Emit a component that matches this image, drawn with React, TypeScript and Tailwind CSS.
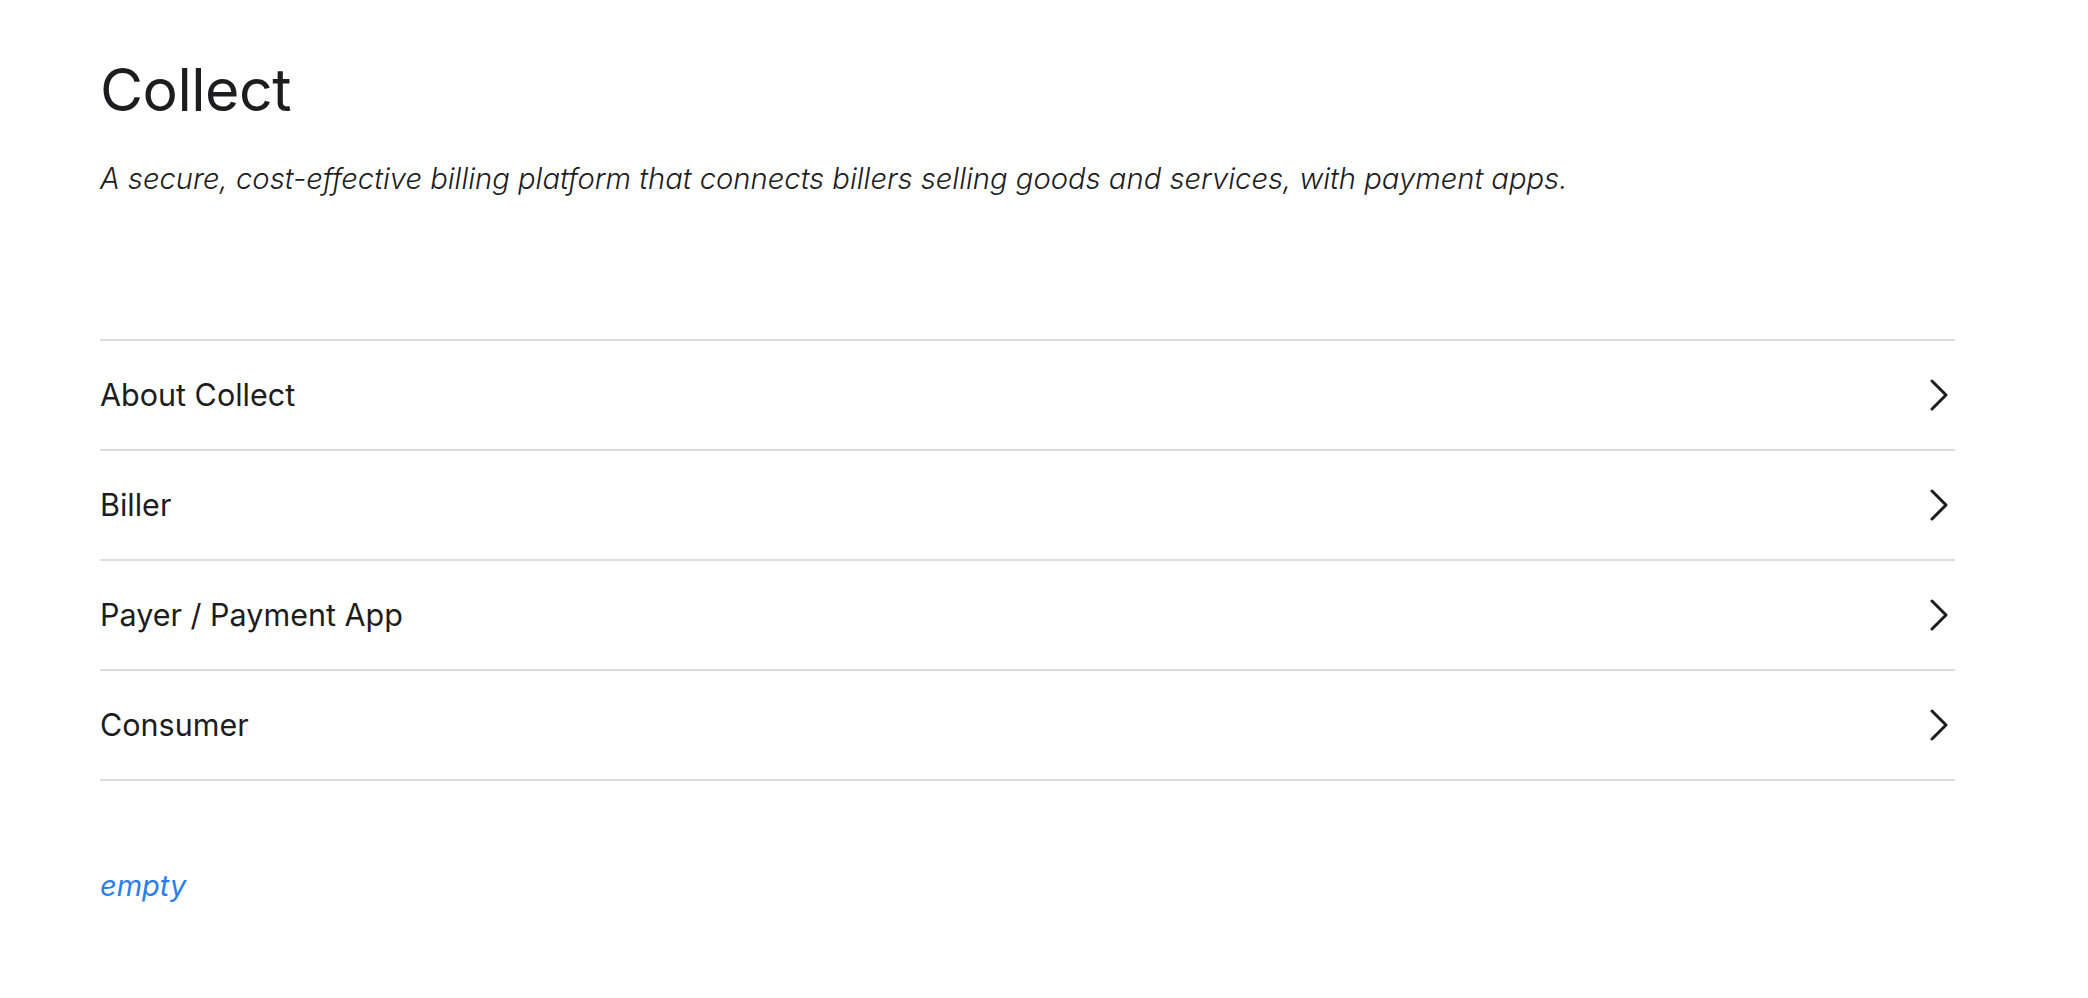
const items = ["About Collect", "Biller", "Payer / Payment App", "Consumer"];

function Chevron() {
  return (
    <svg width="20" height="32" viewBox="0 0 20 32" fill="none" className="shrink-0">
      <path d="M3 2 L17 16 L3 30" stroke="#1d1d1f" strokeWidth="3" strokeLinecap="round" strokeLinejoin="round" />
    </svg>
  );
}

export default function App() {
  return (
    <div className="min-h-screen bg-white text-[#1d1d1f] font-['Inter',sans-serif]">
      <div className="w-[1855px] ml-[100px] pt-[54px]">
        <h1 className="text-[59px] leading-[72px] font-normal tracking-[-0.5px]">Collect</h1>
        <p className="mt-[35px] text-[29.2px] leading-[36px] italic font-light">
          A secure, cost-effective billing platform that connects billers selling goods and services, with payment apps.
        </p>

        <div className="mt-[142px] border-t-2 border-[#dcdcdc]">
          {items.map((item) => (
            <div
              key={item}
              className="h-[110px] flex items-center justify-between border-b-2 border-[#dcdcdc] pr-[6px]"
            >
              <span className="text-[30.5px]">{item}</span>
              <Chevron />
            </div>
          ))}
        </div>

        <div className="mt-[83px] text-[29px] italic text-[#2b7de9]">empty</div>
      </div>
    </div>
  );
}
